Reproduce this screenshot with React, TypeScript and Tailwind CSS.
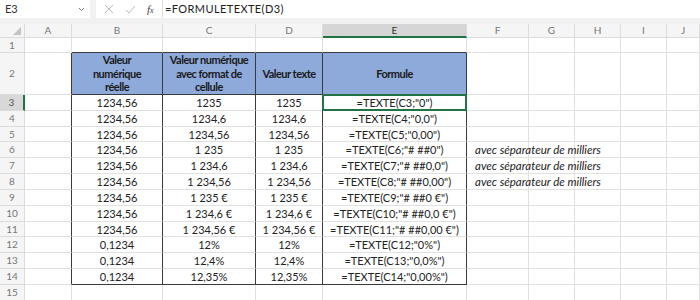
import React from "react";

const cols = ["A", "B", "C", "D", "E", "F", "G", "H", "I", "J"];

const rows: [string, string, string, string, string?][] = [
  ["1234,56", "1235", "1235", '=TEXTE(C3;"0")'],
  ["1234,56", "1234,6", "1234,6", '=TEXTE(C4;"0,0")'],
  ["1234,56", "1234,56", "1234,56", '=TEXTE(C5;"0,00")'],
  ["1234,56", "1 235", "1 235", '=TEXTE(C6;"# ##0")', "avec séparateur de milliers"],
  ["1234,56", "1 234,6", "1 234,6", '=TEXTE(C7;"# ##0,0")', "avec séparateur de milliers"],
  ["1234,56", "1 234,56", "1 234,56", '=TEXTE(C8;"# ##0,00")', "avec séparateur de milliers"],
  ["1234,56", "1 235 €", "1 235 €", '=TEXTE(C9;"# ##0 €")'],
  ["1234,56", "1 234,6 €", "1 234,6 €", '=TEXTE(C10;"# ##0,0 €")'],
  ["1234,56", "1 234,56 €", "1 234,56 €", '=TEXTE(C11;"# ##0,00 €")'],
  ["0,1234", "12%", "12%", '=TEXTE(C12;"0%")'],
  ["0,1234", "12,4%", "12,4%", '=TEXTE(C13;"0,0%")'],
  ["0,1234", "12,35%", "12,35%", '=TEXTE(C14;"0,00%")'],
];

const font = "font-['Lato','Liberation_Sans',sans-serif]";
const grid = "border-r border-b border-[#e1e1e1]";
const dark = "border-[#3a3a3a]";

function RowHeader({ n, active }: { n: number; active?: boolean }) {
  return (
    <div
      className={`flex items-center justify-center text-[10px] border-b border-[#dcdcdc] ${
        active
          ? "bg-[#d8d8d8] text-[#555] border-r-2 border-r-[#217346]"
          : "bg-[#f5f5f5] text-[#777] border-r border-r-[#dcdcdc]"
      }`}
    >
      {n}
    </div>
  );
}

export default function App() {
  return (
    <div className={`w-[700px] h-[300px] overflow-hidden bg-white ${font} text-[#222]`}>
      {/* formula bar */}
      <div className="h-[24px] bg-[#f1f1f1] flex items-start">
        <div className="w-[90px] h-[18px] bg-white flex items-center justify-between pl-[5px] pr-[5px] text-[11px] text-[#333]">
          <span>E3</span>
          <svg width="7" height="5" viewBox="0 0 7 5">
            <path d="M1 1l2.5 2.5L6 1" stroke="#777" strokeWidth="1" fill="none" />
          </svg>
        </div>
        <div className="w-[6px]" />
        <div className="w-[66px] h-[18px] bg-white flex items-center gap-[11px] pl-[8px]">
          <svg width="10" height="10" viewBox="0 0 10 10">
            <path d="M1 1l8 8M9 1l-8 8" stroke="#bbb" strokeWidth="1" />
          </svg>
          <svg width="11" height="9" viewBox="0 0 11 9">
            <path d="M1 5l3 3 6-7" stroke="#bbb" strokeWidth="1" fill="none" />
          </svg>
          <span className="font-['Liberation_Serif',serif] italic text-[11px] text-[#444]">
            f<span className="text-[8px]">x</span>
          </span>
        </div>
        <div className="flex-1 h-[18px] bg-white border-l border-[#e0e0e0] flex items-center pl-[2px] text-[11px] tracking-[0.4px] text-[#222]">
          =FORMULETEXTE(D3)
        </div>
      </div>

      {/* sheet */}
      <div className="grid grid-cols-[25px_47px_91px_93px_67px_144px_62px_46px_46px_46px_1fr] grid-rows-[14px_15px_42px_repeat(13,15.83px)] text-[11px]">
        {/* column headers */}
        <div className="bg-[#f5f5f5] border-r border-b border-[#dcdcdc] relative">
          <svg className="absolute right-[3px] bottom-[2px]" width="8" height="8" viewBox="0 0 8 8">
            <path d="M8 0L8 8L0 8Z" fill="#c4c4c4" />
          </svg>
        </div>
        {cols.map((c) => (
          <div
            key={c}
            className={`flex items-center justify-center text-[10px] border-r border-[#dcdcdc] ${
              c === "E"
                ? "bg-[#d6d6d6] text-[#333] border-b-2 border-b-[#217346]"
                : "bg-[#f5f5f5] text-[#777] border-b border-b-[#dcdcdc]"
            }`}
          >
            {c}
          </div>
        ))}

        {/* row 1 */}
        <RowHeader n={1} />
        <div className={grid} />
        {[0, 1, 2, 3].map((i) => (
          <div key={i} className={`border-r border-r-[#e1e1e1] border-b ${dark}`} />
        ))}
        {[0, 1, 2, 3, 4].map((i) => (
          <div key={i} className={grid} />
        ))}

        {/* row 2 */}
        <RowHeader n={2} />
        <div className={`border-b border-b-[#e1e1e1] border-r ${dark}`} />
        {[
          ["Valeur", "numérique", "réelle"],
          ["Valeur numérique", "avec format de", "cellule"],
          ["Valeur texte"],
          ["Formule"],
        ].map((lines, i) => (
          <div
            key={i}
            className={`bg-[#8eaadb] border-r border-b ${dark} flex flex-col items-center justify-center font-bold text-[11px] tracking-[-0.5px] leading-[13.5px] text-[#1a1a1a] text-center`}
          >
            {lines.map((l) => (
              <span key={l}>{l}</span>
            ))}
          </div>
        ))}
        {[0, 1, 2, 3, 4].map((i) => (
          <div key={i} className={grid} />
        ))}

        {/* rows 3-14 */}
        {rows.map((r, idx) => {
          const n = idx + 3;
          const last = n === 14;
          const hb = last ? `border-b ${dark}` : "border-b border-b-[#e1e1e1]";
          return (
            <React.Fragment key={n}>
              <RowHeader n={n} active={n === 3} />
              <div className={`border-b border-b-[#e1e1e1] border-r ${dark}`} />
              {r.slice(0, 4).map((v, i) => (
                <div
                  key={i}
                  className={`relative border-r ${dark} ${hb} flex items-center justify-center whitespace-nowrap leading-none`}
                >
                  {v}
                  {n === 3 && i === 3 && (
                    <div className="absolute -left-[1px] -top-[1px] -right-[1px] -bottom-[1px] border-2 border-[#217346]" />
                  )}
                </div>
              ))}
              <div className={`${grid} relative`}>
                {r[4] && (
                  <span className="absolute left-[8px] top-0 bottom-0 flex items-center italic text-[11.5px] whitespace-nowrap leading-none">
                    {r[4]}
                  </span>
                )}
              </div>
              {[0, 1, 2, 3].map((i) => (
                <div key={i} className={grid} />
              ))}
            </React.Fragment>
          );
        })}

        {/* row 15 */}
        <RowHeader n={15} />
        {cols.map((c) => (
          <div key={c} className={grid} />
        ))}
      </div>
    </div>
  );
}
